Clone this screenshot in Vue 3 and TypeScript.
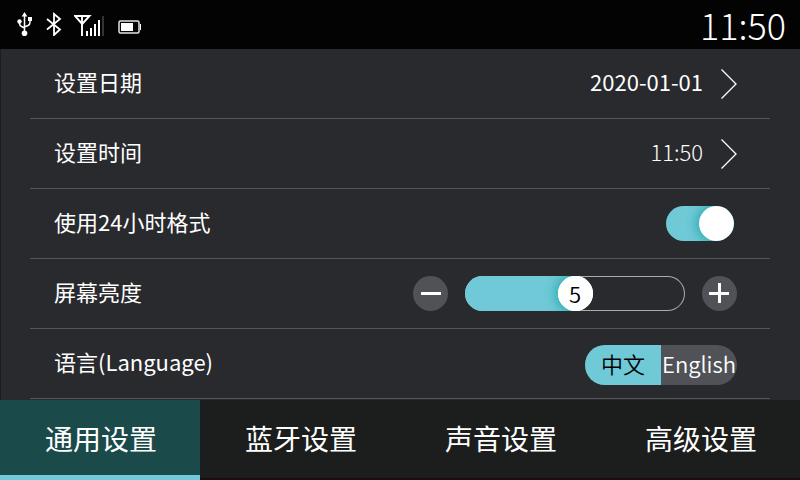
<script setup lang="ts">
import { computed, ref } from 'vue'

interface Tab {
  id: string
  label: string
}

const tabs: Tab[] = [
  { id: 'general', label: '通用设置' },
  { id: 'bluetooth', label: '蓝牙设置' },
  { id: 'sound', label: '声音设置' },
  { id: 'advanced', label: '高级设置' },
]

const activeTab = ref('general')
const date = ref('2020-01-01')
const time = ref('11:50')
const use24Hour = ref(true)
const language = ref<'zh' | 'en'>('zh')

const maxBrightness = 10
const brightness = ref(5)
const ratio = computed(() => brightness.value / maxBrightness)
const thumbLeft = computed(() => `calc((100% - 35px) * ${ratio.value})`)

function step(delta: number) {
  brightness.value = Math.min(maxBrightness, Math.max(0, brightness.value + delta))
}
</script>

<template>
  <div class="screen">
    <header class="status">
      <div class="status-icons">
        <svg width="16" height="24" viewBox="0 0 16 24" aria-hidden="true">
          <path d="M7.500 3V20M2.500 9v2.500q0 2 2 3l3 1.500M13 8v2.500q0 2-2 3L7.500 15" fill="none" stroke="#fff" stroke-width="1.500" />
          <path d="M7.500 0l2.800 4.500H4.700z" fill="#fff" />
          <circle cx="2.500" cy="9.500" r="2.200" fill="#fff" />
          <rect x="11" y="5" width="4" height="4" fill="#fff" />
          <circle cx="7.500" cy="21.200" r="2.800" fill="#fff" />
        </svg>
        <svg width="17" height="24" viewBox="0 0 17 24" aria-hidden="true">
          <path d="M2 7l13 10.500L9 23V2l6 5L2 17.500" fill="none" stroke="#fff" stroke-width="1.800" />
        </svg>
        <svg width="32" height="24" viewBox="0 0 32 24" aria-hidden="true">
          <path d="M1 4h14.500L8.200 12zM8 4V24" fill="none" stroke="#fff" stroke-width="1.900" />
          <path d="M12 19h2v5h-2zM16 16h2v8h-2zM20 12h2v12h-2zM24 8h2v16h-2z" fill="#fff" />
          <path d="M28 4h2v20h-2z" fill="#333" />
        </svg>
        <svg class="battery" width="24" height="14" viewBox="0 0 24 14" aria-hidden="true">
          <rect x="1" y="1" width="20" height="12" rx="1.500" fill="none" stroke="#e4e4e4" stroke-width="1.500" />
          <path d="M3 3h12v8H3z" fill="#fff" />
          <path d="M22 4h1v6h-1z" fill="#fff" />
        </svg>
      </div>
      <time class="clock">{{ time }}</time>
    </header>

    <main class="settings">
      <div class="row">
        <span id="date-label" class="label">设置日期</span>
        <button class="value" type="button" aria-labelledby="date-label">
          <span>{{ date }}</span>
          <svg width="16" height="30" viewBox="0 0 16 30" aria-hidden="true">
            <path d="M.5 .5L15 15 .5 29.500" fill="none" stroke="#fff" stroke-width="1.300" />
          </svg>
        </button>
      </div>

      <div class="row">
        <span id="time-label" class="label">设置时间</span>
        <button class="value light" type="button" aria-labelledby="time-label">
          <span>{{ time }}</span>
          <svg width="16" height="30" viewBox="0 0 16 30" aria-hidden="true">
            <path d="M.5 .5L15 15 .5 29.500" fill="none" stroke="#fff" stroke-width="1.300" />
          </svg>
        </button>
      </div>

      <div class="row">
        <label class="label" for="hour-format">使用24小时格式</label>
        <input id="hour-format" v-model="use24Hour" class="switch" type="checkbox" role="switch" />
      </div>

      <div class="row">
        <label class="label" for="brightness">屏幕亮度</label>
        <div class="stepper">
          <button class="round" type="button" aria-label="降低亮度" @click="step(-1)">
            <svg width="35" height="35" viewBox="0 0 35 35" aria-hidden="true">
              <path d="M8 16h20v3H8z" fill="#fff" />
            </svg>
          </button>
          <div class="slider">
            <div class="fill" :style="{ width: `calc(17px + (100% - 35px) * ${ratio})` }"></div>
            <input id="brightness" v-model.number="brightness" type="range" min="0" :max="maxBrightness" />
            <output class="bubble" for="brightness" :style="{ left: thumbLeft }">{{ brightness }}</output>
          </div>
          <button class="round" type="button" aria-label="提高亮度" @click="step(1)">
            <svg width="35" height="35" viewBox="0 0 35 35" aria-hidden="true">
              <path d="M7 16h20v3H7zM16 7h3v20h-3z" fill="#fff" />
            </svg>
          </button>
        </div>
      </div>

      <div class="row">
        <span id="language-label" class="label">语言(Language)</span>
        <div class="segments" role="group" aria-labelledby="language-label">
          <button type="button" :class="{ on: language === 'zh' }" :aria-pressed="language === 'zh'" @click="language = 'zh'">中文</button>
          <button type="button" :class="{ on: language === 'en' }" :aria-pressed="language === 'en'" @click="language = 'en'">English</button>
        </div>
      </div>
    </main>

    <nav class="tabs">
      <button
        v-for="tab in tabs"
        :key="tab.id"
        type="button"
        class="tab"
        :class="{ active: tab.id === activeTab }"
        @click="activeTab = tab.id"
      >
        {{ tab.label }}
      </button>
    </nav>
  </div>
</template>

<style>
body {
  margin: 0;
  background: #292a2e;
}
</style>

<style scoped>
.screen {
  display: flex;
  flex-direction: column;
  min-height: 100vh;
  box-sizing: border-box;
  background: #292a2e;
  color: #fff;
  font-family: "Noto Sans CJK SC", "Noto Sans", sans-serif;
  font-size: 22px;
}

button {
  margin: 0;
  padding: 0;
  border: 0;
  background: none;
  color: inherit;
  font: inherit;
  cursor: pointer;
}

svg {
  display: block;
}

.status {
  display: flex;
  justify-content: space-between;
  align-items: flex-start;
  height: 49px;
  padding: 0 14px 0 17px;
  box-sizing: border-box;
  background: #030303;
}

.status-icons {
  display: flex;
  gap: 12px;
  padding-top: 12px;
}

.battery {
  margin-top: 8px;
}

.clock {
  font-size: 36px;
  font-weight: 300;
  line-height: 48px;
}

.settings {
  flex: 1;
  padding: 0 30px 0 29px;
  border-left: 1px solid #1b1c1f;
}

.row {
  display: flex;
  justify-content: space-between;
  align-items: center;
  height: 69px;
  padding: 0 33px 0 24px;
  border-bottom: 1px solid #555659;
}

.label {
  padding-bottom: 6px;
  line-height: 32px;
}

.value {
  display: flex;
  align-items: center;
  gap: 18px;
  line-height: 32px;
}

.value span {
  padding-bottom: 6px;
}

.light {
  font-weight: 300;
}

.switch {
  appearance: none;
  display: flex;
  justify-content: flex-start;
  width: 68px;
  height: 35px;
  margin: 0 3px 0 0;
  border-radius: 18px;
  background: #505257;
  overflow: hidden;
  cursor: pointer;
}

.switch::before {
  content: "";
  width: 35px;
  height: 35px;
  border-radius: 50%;
  background: #fff;
}

.switch:checked {
  justify-content: flex-end;
  background: #70c9d7;
}

.switch:checked::before {
  box-shadow: 0 0 12px 2px #22a8ab;
}

.stepper {
  display: flex;
  align-items: center;
  gap: 17px;
}

.round {
  width: 35px;
  height: 35px;
  border-radius: 50%;
  background: #505257;
}

.slider {
  position: relative;
  width: 220px;
  height: 35px;
  box-sizing: border-box;
  border-radius: 18px;
  box-shadow: inset 0 0 0 1px #aaabad;
  overflow: hidden;
}

.fill {
  display: flex;
  justify-content: flex-end;
  height: 35px;
  background: #70c9d7;
  overflow: hidden;
}

.fill::after {
  content: "";
  flex: none;
  width: 35px;
  height: 35px;
  margin-right: -18px;
  border-radius: 50%;
  box-shadow: 0 0 12px 2px #22a8ab;
}

.slider input {
  appearance: none;
  position: absolute;
  inset: 0;
  width: 100%;
  margin: 0;
  background: transparent;
  cursor: pointer;
}

.slider input::-webkit-slider-thumb {
  appearance: none;
  width: 35px;
  height: 35px;
  border-radius: 50%;
  background: #fff;
}

.bubble {
  position: absolute;
  top: 0;
  width: 35px;
  height: 35px;
  border-radius: 50%;
  background: #fff;
  color: #000;
  font-weight: 350;
  line-height: 34px;
  text-align: center;
  pointer-events: none;
}

.segments {
  display: grid;
  grid-template-columns: 76px 76px;
  height: 40px;
  margin-top: 2px;
  border-radius: 20px;
  background: #505257;
  overflow: hidden;
}

.segments button {
  padding-bottom: 4px;
  font-weight: 350;
  line-height: 36px;
  white-space: nowrap;
}

.segments .on {
  background: #70c9d7;
  color: #000;
}

.tabs {
  display: grid;
  grid-template-columns: repeat(4, 1fr);
  height: 80px;
  background: #1c1e1d;
  box-shadow: inset 0 -2px #170f15;
}

.tab {
  padding-left: 2px;
  border-bottom: 5px solid transparent;
  font-size: 28px;
  line-height: 40px;
}

.tab.active {
  border-bottom-color: #70c9d7;
  background: #1b4a4a;
}
</style>
